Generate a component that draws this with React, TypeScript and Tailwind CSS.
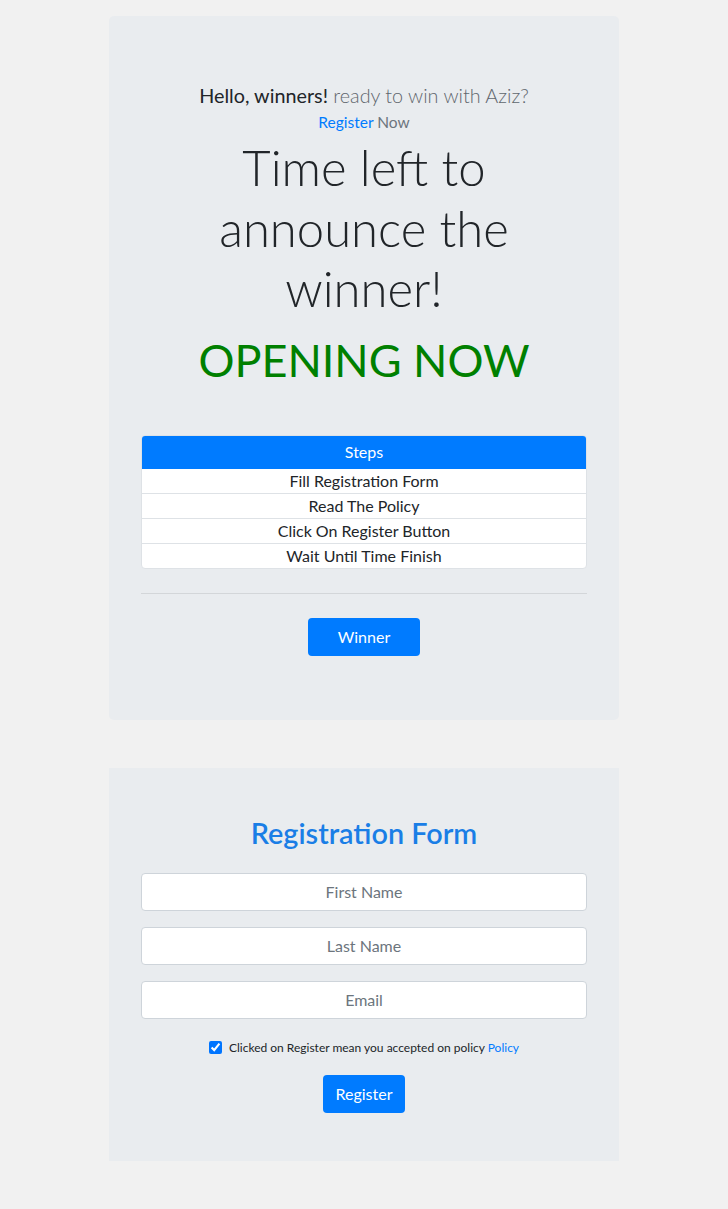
import React from "react";

export default function App() {
  const font = { fontFamily: "Lato, 'Open Sans', sans-serif" };
  return (
    <div className="min-h-[1209px] bg-[#f1f1f1] pt-4 pb-12 text-[#212529]" style={font}>
      <div className="mx-auto w-[510px] rounded-[5px] bg-[#e9ecef] px-8 pt-16 pb-16 text-center">
        <p className="text-[19.8px] leading-[30px] font-light">
          <span className="font-normal text-[#212529]">Hello, winners!</span>{" "}
          <span className="text-[#5f666d]">ready to win with Aziz?</span>
        </p>
        <p className="text-[15.5px] leading-[24px] text-[#6c757d]">
          <a className="text-[#007bff]">Register</a> Now
        </p>
        <h1 className="mt-[3px] text-[49px] leading-[60.5px] font-light text-[#212529]">
          Time left to
          <br />
          announce the
          <br />
          winner!
        </h1>
        <h2 className="mt-[17px] text-[45px] leading-[48px] font-normal text-[#008000]">OPENING NOW</h2>
        <div className="mt-[51px] overflow-hidden rounded-[4px] border border-[#dee2e6] bg-white text-[16px] leading-[24px]">
          <div className="-mx-px -mt-px bg-[#007bff] py-[5px] text-white">Steps</div>
          <div className="border-b border-[#dee2e6]">Fill Registration Form</div>
          <div className="border-b border-[#dee2e6]">Read The Policy</div>
          <div className="border-b border-[#dee2e6]">Click On Register Button</div>
          <div>Wait Until Time Finish</div>
        </div>
        <hr className="mt-6 border-t border-[#d3d6d9]" />
        <button className="mt-6 h-[38px] w-[112px] rounded-[4px] bg-[#007bff] text-[16px] text-white">Winner</button>
      </div>

      <div className="mx-auto mt-[48px] w-[510px] bg-[#e9ecef] px-8 pt-12 pb-12 text-center">
        <h2 className="text-[28.8px] leading-[34px] font-semibold text-[#1a7ee6]">Registration Form</h2>
        <div className="mt-[23px] flex flex-col gap-4">
          <input className="h-[38px] w-full rounded-[4px] border border-[#ced4da] bg-white text-center text-[16px] placeholder:text-[#6c757d]" placeholder="First Name" />
          <input className="h-[38px] w-full rounded-[4px] border border-[#ced4da] bg-white text-center text-[16px] placeholder:text-[#6c757d]" placeholder="Last Name" />
          <input className="h-[38px] w-full rounded-[4px] border border-[#ced4da] bg-white text-center text-[16px] placeholder:text-[#6c757d]" placeholder="Email" />
        </div>
        <div className="mt-[21px] flex items-center justify-center gap-[7px] text-[12px] leading-[16px]">
          <input type="checkbox" defaultChecked className="h-[13px] w-[13px]" />
          <span>
            Clicked on Register mean you accepted on policy <a className="text-[#007bff]">Policy</a>
          </span>
        </div>
        <button className="mt-[19px] h-[38px] w-[82px] rounded-[4px] bg-[#007bff] text-[16px] text-white">Register</button>
      </div>
    </div>
  );
}
